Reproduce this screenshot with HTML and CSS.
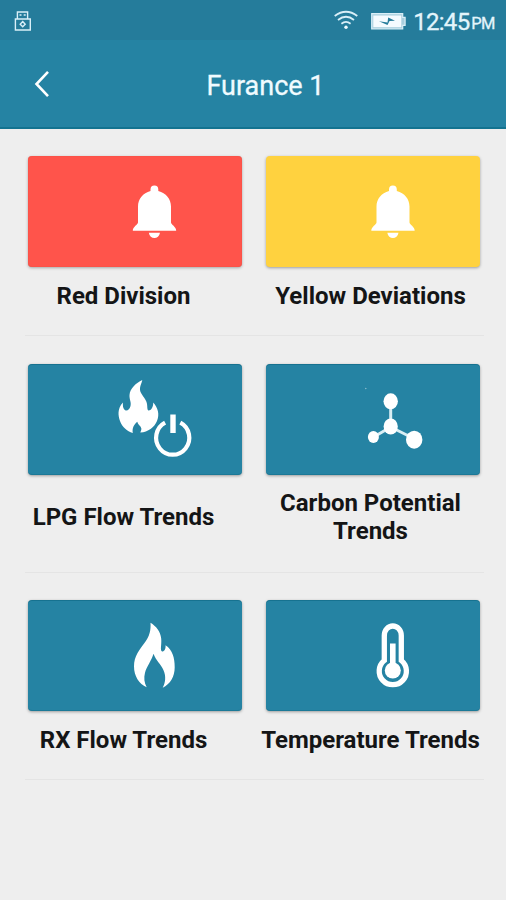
FILE: index.html
```
<!DOCTYPE html>
<html lang="en">
<head>
<meta charset="utf-8">
<title>Furance 1</title>
<link rel="stylesheet" href="styles.css">
</head>
<body>
<header class="header">
  <div class="status">
    <svg class="usb" width="18" height="22" viewBox="0 0 18 22" fill="none" stroke="#d9eff8" stroke-width="1.4"><path d="M3.4 8.5V2h10.2v6.5M1.4 9h14.9v11H1.4z"/><path d="M5.5 5h2M9.7 5h2"/><path d="M8.7 11.6l2.5 2.6-2.5 2.6-2.5-2.6z"/></svg>
    <svg class="wifi" width="24" height="20" viewBox="0 0 24 20" fill="none" stroke="#d9eff8" stroke-width="1.8"><path d="M.7 6Q12-2.500 23.3 6M4 10Q12 3.600 20 10M7.400 13.700Q12 10.200 16.600 13.700"/><circle cx="12" cy="17.300" r="1.7" fill="#f0fbff" stroke="none"/></svg>
    <svg class="battery" width="35" height="17" viewBox="0 0 35 17"><path d="M.7.7h31v3.600h2.400v8h-2.400v3.500H.7z" fill="#a9cfde" stroke="#d9eff8" stroke-width="1.200"/><path d="M2.300 2.500h28v11.700h-28z" fill="#f5fbff"/><path d="M8 8.200l8.500 1.200L17.200 4.500 24 7.700 18.500 7.900 16.500 12z" fill="#257c9b"/></svg>
    <span class="time">12:45</span><span class="meridiem">PM</span>
  </div>
  <div class="toolbar">
    <svg class="back" width="16" height="28" viewBox="0 0 16 28" fill="none" stroke="#fff" stroke-width="2.6"><path d="M14 1.800L2.500 14 14 26.200"/></svg>
    <h1 class="title">Furance 1</h1>
  </div>
</header>
<main>
  <section class="group">
    <div class="cards">
      <div class="card red"><svg viewBox="28 155.500 214 111" fill="#fff"><path d="M150.500 190.500V189a3.900 3.900 0 0 1 7.800 0v1.500C166 192.500 171 198.500 171 206v16c0 1.800 5.200 4.400 5.200 8.200h-43.400c0-3.800 5.200-6.400 5.200-8.200v-16c0-7.500 5-13.500 12.500-15.500zM148.800 232.200h11.200c-1 7-10.200 7-11.200 0z"/></svg></div>
      <div class="card yellow"><svg viewBox="27.500 155.500 214 111" fill="#fff"><path d="M150.500 190.500V189a3.900 3.900 0 0 1 7.800 0v1.500C166 192.500 171 198.500 171 206v16c0 1.800 5.200 4.400 5.200 8.200h-43.400c0-3.800 5.200-6.400 5.200-8.200v-16c0-7.500 5-13.500 12.500-15.500zM148.800 232.200h11.200c-1 7-10.200 7-11.200 0z"/></svg></div>
    </div>
    <div class="labels"><span>Red Division</span><span>Yellow Deviations</span></div>
  </section>
  <section class="group flow">
    <div class="cards">
      <div class="card"><svg viewBox="28 364 214 111" fill="#fff"><path d="M142.300 380C136 383 130 388.500 129.500 395c-.3 4.500 2 7 1 11-.8 3-2.500 4.700-4.500 4.500-2.500-.5-3.500-4-3-8-6 6-4.800 13.500-3 18.500 2.200 6 7 10 12.800 12-.8-5 1.200-8.500 4.500-11.300 1 3.500 3.500 4 4 6.500.3 1.700-.5 3-1 4.300 8-.5 14-5 16.700-11.500 2.800-7 1-13-3.800-18.500.2 4.500-2.200 8-4.500 8-2.200-.3-.7-5-2.400-9-2.300-5.500-7-8.500-6.300-13.500.3-3 1.800-5 2.300-8z"/><path d="M165.100 422.600a16.600 17 0 1 0 15.200 0" fill="none" stroke="#fff" stroke-width="4.200"/><path d="M170.300 414.400h5.400v18.700h-5.400z"/></svg></div>
      <div class="card"><svg viewBox="266 364 214 111" fill="#fff"><path d="M390.700 401v26M390.700 427l-17 10M390.700 427l24 12" fill="none" stroke="#d9eef4" stroke-width="3"/><ellipse cx="390.700" cy="401.300" rx="7.200" ry="8"/><ellipse cx="390.700" cy="426.500" rx="7.100" ry="8"/><ellipse cx="373.400" cy="437" rx="5.500" ry="6.100"/><ellipse cx="414.200" cy="439.700" rx="8.200" ry="9"/><circle cx="365.800" cy="388.500" r=".7" opacity=".5"/></svg></div>
    </div>
    <div class="labels"><span>LPG Flow Trends</span><span>Carbon Potential<br>Trends</span></div>
  </section>
  <section class="group">
    <div class="cards">
      <div class="card"><svg viewBox="28 600 214 111" fill="#fff"><path d="M150.500 622.700c.5 7.500-1 13.500-5.500 19.500-5.500 7.500-11 14-11 24 0 10 5 17.500 12.700 21-2.500-4.500-3-9.500-1.700-14.500 1.800-6.500 6.500-12 8.500-19 2.200 6.500 7.500 10.500 10 16.500 2.700 6 2 12.500-.8 17.500 7.500-3.700 12-11 12-20.500 0-9.500-2.200-17.500-9.200-22 .5 3.500-1.200 6.300-3.300 6.300-2.500-.8-.4-6.500-1-13-.7-7-5.200-12.500-10.700-15.800z"/></svg></div>
      <div class="card"><svg viewBox="266 600 214 111" fill="none" stroke="#fff"><path d="M384.300 635.500a8.500 9.500 0 0 1 17 0V660.500a13.600 13.600 0 1 1-17 0z" stroke-width="5.300"/><path d="M392.800 643.500v26" stroke-width="5.600"/><circle cx="392.800" cy="670.500" r="8" fill="#fff" stroke="none"/></svg></div>
    </div>
    <div class="labels"><span>RX Flow Trends</span><span>Temperature Trends</span></div>
  </section>
</main>
</body>
</html>
```
FILE: styles.css
```
* { box-sizing: border-box; }
body {
  margin: 0;
  height: 900px;
  background: #eeeeee;
  font-family: Roboto, "Liberation Sans", sans-serif;
}
svg { display: block; flex: none; }
.header {
  height: 129px;
  background: #2583a3;
  border-bottom: 2px solid #137390;
}
.status {
  display: flex;
  align-items: flex-start;
  height: 40px;
  padding: 10px 11px 0 14px;
  background: #257c9b;
  color: #e3f5fb;
}
.wifi { margin-left: auto; }
.battery { margin: 3px 7px 0 13px; }
.time {
  width: 58px;
  font-size: 24px;
  line-height: 24px;
  letter-spacing: -.7px;
  -webkit-text-stroke: .3px;
}
.meridiem {
  font-size: 16.5px;
  line-height: 27px;
  letter-spacing: -.5px;
  -webkit-text-stroke: .3px;
}
.toolbar {
  display: grid;
  grid-template-columns: 34px 1fr 34px;
  align-items: center;
  height: 88px;
  padding: 0 7px 0 34px;
}
.toolbar .title {
  margin: 3px 0 0 -2px;
  color: #f0fbff;
  font-size: 27px;
  line-height: 32px;
  font-weight: 400;
  text-align: center;
  -webkit-text-stroke: .3px;
}
.group {
  position: relative;
  height: 207px;
  padding-top: 27px;
}
.group:first-child { height: 208px; }
.group.flow { height: 236px; }
.group::after {
  content: "";
  position: absolute;
  left: 25px;
  right: 22px;
  bottom: 0;
  height: 1px;
  background: #e4e4e4;
}
.group:first-child::after { bottom: 1px; }
.group.flow::after { bottom: 0; }
.cards {
  display: grid;
  grid-template-columns: 214px 214px;
  column-gap: 24px;
  padding-left: 28px;
}
.card {
  height: 111px;
  border-radius: 4px;
  background: #2583a3;
  box-shadow: 0 1px 3px rgba(0, 0, 0, .35), inset 0 1px 0 rgba(0, 90, 115, .4), inset 0 -1px 0 rgba(0, 90, 115, .25);
  overflow: hidden;
}
.card svg { width: 214px; height: 111px; }
.card.red {
  background: #ff544b;
  box-shadow: 0 1px 3px rgba(0, 0, 0, .3), inset 0 0 1px #d34638;
}
.card.yellow {
  background: #ffd23f;
  box-shadow: 0 1px 3px rgba(0, 0, 0, .35);
}
.labels {
  display: grid;
  grid-template-columns: 247px 247px;
  align-items: center;
  justify-items: center;
  margin-top: 15px;
  color: #141516;
  font-size: 24px;
  line-height: 28px;
  font-weight: 700;
  text-align: center;
  white-space: nowrap;
}
.flow .labels { margin-top: 14px; }
```
